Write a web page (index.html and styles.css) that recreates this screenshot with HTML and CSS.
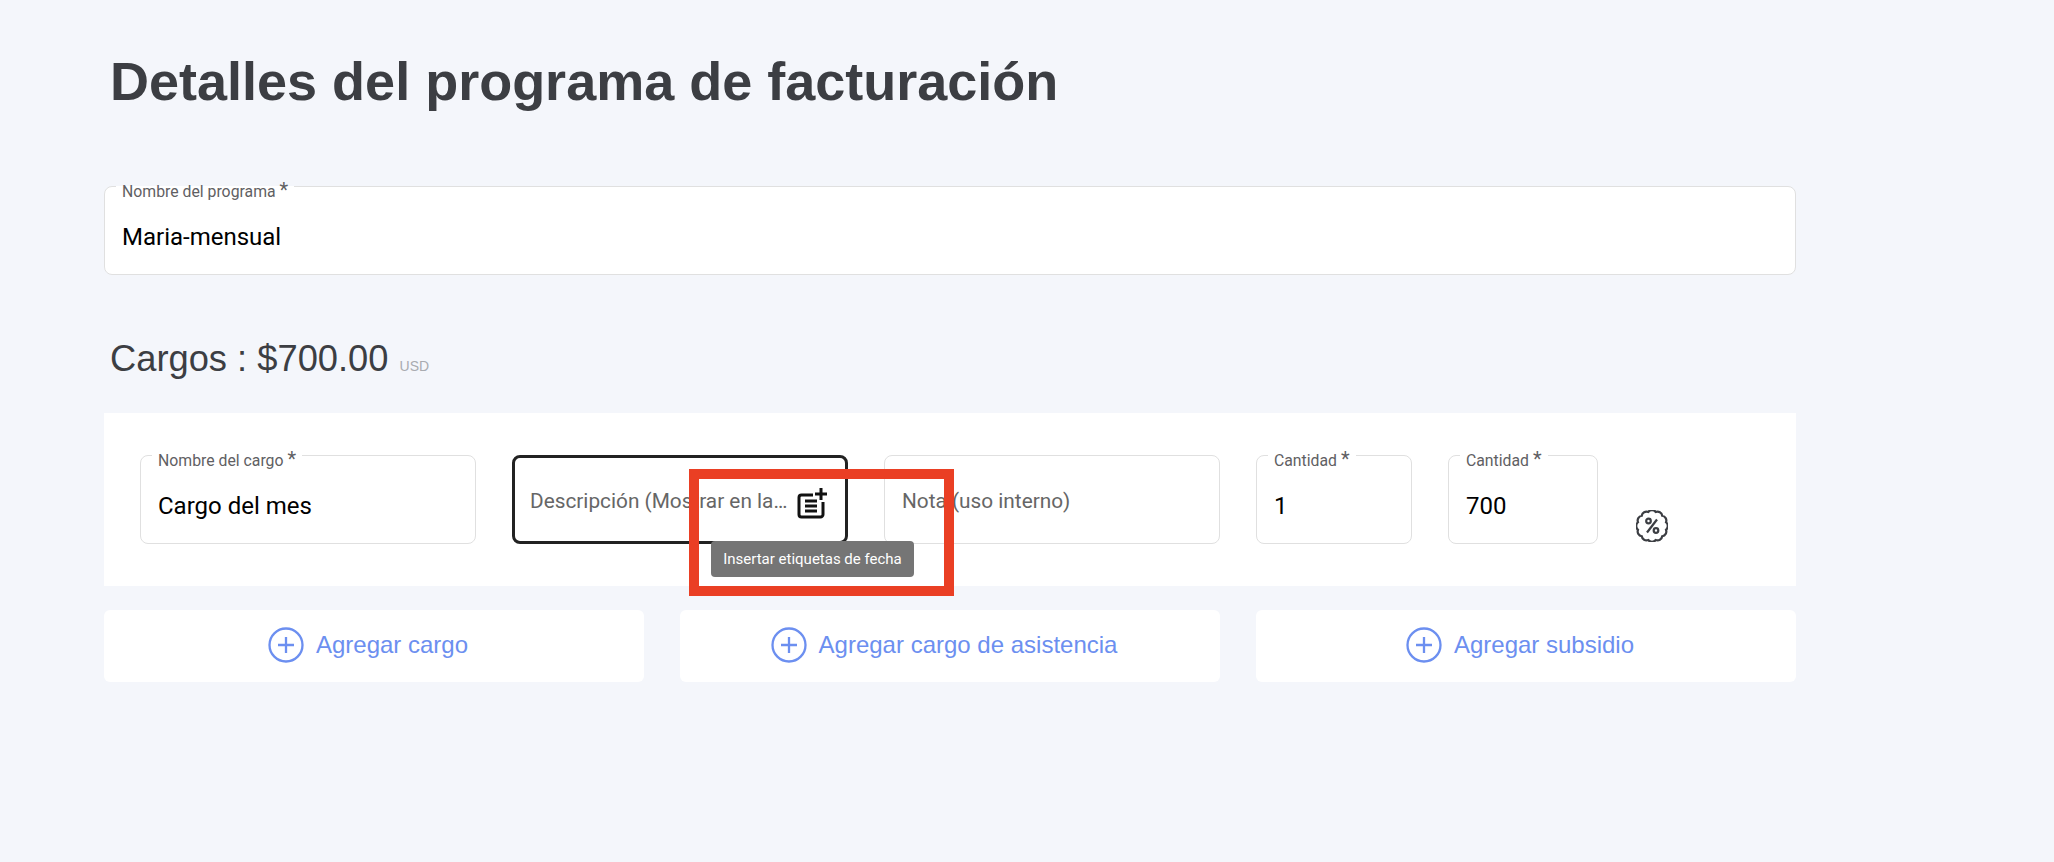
FILE: index.html
```html
<!DOCTYPE html>
<html lang="es">
<head>
    <meta charset="UTF-8">
    <meta name="viewport" content="width=device-width, initial-scale=1.0">
    <title>Detalles del programa de facturación</title>
    <link rel="stylesheet" href="styles.css">
</head>
<body>
    <div class="page">
        <h1>Detalles del programa de facturación</h1>

        <!-- Program name -->
        <div class="field field-program">
            <label for="program">Nombre del programa <span class="req">*</span></label>
            <input type="text" id="program" value="Maria-mensual">
        </div>

        <h2 class="charges-title">Cargos : $700.00 <small>USD</small></h2>

        <!-- Charge row -->
        <div class="charge-card">
            <div class="field field-wide">
                <label for="charge_name">Nombre del cargo <span class="req">*</span></label>
                <input type="text" id="charge_name" value="Cargo del mes">
            </div>
            <div class="field field-wide field-focus">
                <input type="text" id="charge_desc" class="empty" placeholder="Descripción (Mostrar en la factura)">
                <svg class="tag-icon" width="32" height="32" viewBox="0 0 32 32" fill="none" stroke="#111" stroke-width="3">
                    <path d="M16 8H4.500a2.500 2.500 0 0 0-2.500 2.500V27.500a2.500 2.500 0 0 0 2.500 2.500H23.500a2.500 2.500 0 0 0 2.500-2.500V15"/>
                    <path d="M24 1v12M18 7h12"/>
                    <path d="M8 14h12M8 19h12M8 24h12"/>
                </svg>
                <div class="tooltip">Insertar etiquetas de fecha</div>
                <div class="highlight"></div>
            </div>
            <div class="field field-wide">
                <input type="text" id="charge_note" class="empty" placeholder="Nota (uso interno)">
            </div>
            <div class="field field-qty">
                <label for="charge_qty">Cantidad <span class="req">*</span></label>
                <input type="text" id="charge_qty" value="1">
            </div>
            <div class="field field-amount">
                <label for="charge_amount">Cantidad <span class="req">*</span></label>
                <input type="text" id="charge_amount" value="700">
            </div>
            <svg class="discount-icon" width="32" height="32" viewBox="0 0 32 32" fill="none" stroke="#3c3e43" stroke-width="2.2">
                <path d="M30 12.250A4.800 4.800 0 0 1 30 19.750A4.800 4.800 0 0 1 26.250 26.250A4.800 4.800 0 0 1 19.750 30A4.800 4.800 0 0 1 12.250 30A4.800 4.800 0 0 1 5.750 26.250A4.800 4.800 0 0 1 2 19.750A4.800 4.800 0 0 1 2 12.250A4.800 4.800 0 0 1 5.750 5.750A4.800 4.800 0 0 1 12.250 2A4.800 4.800 0 0 1 19.750 2A4.800 4.800 0 0 1 26.250 5.750A4.800 4.800 0 0 1 30 12.250Z"/>
                <path d="M21 9.500L11 22.500"/>
                <circle cx="12.500" cy="11" r="2.300"/>
                <circle cx="20" cy="20.500" r="2.300"/>
            </svg>
        </div>

        <!-- Add buttons -->
        <div class="add-row">
            <button type="button">
                <svg width="36" height="36" viewBox="0 0 36 36" fill="none" stroke="#6c8ff0" stroke-width="2.300"><circle cx="18" cy="18" r="16.500"/><path d="M18 10v16M10 18h16"/></svg>
                Agregar cargo
            </button>
            <button type="button">
                <svg width="36" height="36" viewBox="0 0 36 36" fill="none" stroke="#6c8ff0" stroke-width="2.300"><circle cx="18" cy="18" r="16.500"/><path d="M18 10v16M10 18h16"/></svg>
                Agregar cargo de asistencia
            </button>
            <button type="button">
                <svg width="36" height="36" viewBox="0 0 36 36" fill="none" stroke="#6c8ff0" stroke-width="2.300"><circle cx="18" cy="18" r="16.500"/><path d="M18 10v16M10 18h16"/></svg>
                Agregar subsidio
            </button>
        </div>
    </div>
</body>
</html>
```

FILE: styles.css
```css
body {
    margin: 0;
    background-color: #f4f6fb;
    font-family: "Liberation Sans", Arial, sans-serif;
    color: #3c3e43;
}
.page {
    width: 1692px;
    margin-left: 104px;
}
h1 {
    margin: 0;
    padding: 51px 0 0 6px;
    font-size: 54px;
    line-height: 60px;
    font-weight: bold;
}
.charges-title {
    margin: 0;
    padding: 62px 0 0 6px;
    height: 76px;
    font-size: 36.3px;
    line-height: 44px;
    font-weight: normal;
}
.charges-title small {
    font-size: 14px;
    color: #a9abb0;
    margin-left: 1px;
}

/* Inputs */
.field {
    position: relative;
    height: 89px;
}
.field input {
    display: block;
    width: 100%;
    height: 100%;
    box-sizing: border-box;
    padding: 12px 17px 0;
    border: 1px solid #e0e0e0;
    border-radius: 8px;
    background: white;
    outline: none;
    font-family: Roboto, sans-serif;
    font-size: 24px;
    color: #000;
    text-overflow: ellipsis;
}
.field input.empty {
    padding-top: 2px;
    padding-bottom: 0;
    font-size: 20.8px;
}
.field input::placeholder {
    color: #666;
    opacity: 1;
}
.field label {
    position: absolute;
    top: 0;
    left: 12px;
    padding: 0 6px;
    background: white;
    font-family: Roboto, sans-serif;
    font-size: 15.8px;
    line-height: 9px;
    color: #5f6063;
    white-space: nowrap;
}
.req {
    font-size: 20px;
    line-height: 9px;
}
.field-program {
    margin-top: 75px;
}
.field-wide {
    width: 336px;
}
.field-qty {
    width: 156px;
}
.field-amount {
    width: 150px;
}
.field-focus {
    z-index: 1;
}
.field-focus input {
    border: 3px solid #222;
    padding-left: 15px;
    padding-right: 56px;
}

.charge-card {
    display: flex;
    gap: 36px;
    padding: 42px 36px;
    background: white;
}
.discount-icon {
    flex: none;
    margin: 55px 0 0 2px;
}
.tag-icon {
    position: absolute;
    top: 32px;
    left: 285px;
}
.tooltip {
    position: absolute;
    top: 86px;
    left: 199px;
    width: 203px;
    height: 36px;
    border-radius: 4px;
    background: #757575;
    color: white;
    font-family: Roboto, sans-serif;
    font-size: 15px;
    line-height: 36px;
    text-align: center;
}
.highlight {
    position: absolute;
    top: 14px;
    left: 177px;
    width: 265px;
    height: 127px;
    box-sizing: border-box;
    border: 10px solid #ea3f24;
}

.add-row {
    display: grid;
    grid-template-columns: repeat(3, 1fr);
    gap: 36px;
    margin-top: 24px;
}
.add-row button {
    display: flex;
    align-items: center;
    justify-content: center;
    gap: 12px;
    height: 72px;
    padding: 0 12px 2px 0;
    border: none;
    border-radius: 6px;
    background: white;
    color: #6c8ff0;
    font-family: "Liberation Sans", Arial, sans-serif;
    font-size: 24px;
    cursor: pointer;
}
```
